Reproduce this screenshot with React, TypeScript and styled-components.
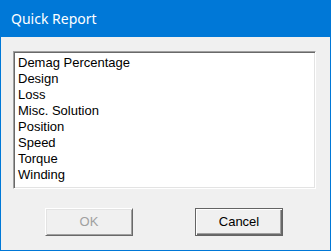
import React from "react";
import styled, { createGlobalStyle } from "styled-components";

const Global = createGlobalStyle`
  html, body { margin: 0; padding: 0; background: #f0f0f0; }
  * { box-sizing: border-box; }
`;

const Window = styled.div`
  width: 331px;
  height: 251px;
  display: flex;
  flex-direction: column;
  background: #f0f0f0;
  border: 1px solid #0078d7;
  border-top: none;
`;

const TitleBar = styled.div`
  height: 37px;
  margin: 0 -1px;
  background: #0078d7;
  color: #ffffff;
  display: flex;
  align-items: center;
  padding-left: 11px;
  padding-bottom: 1px;
  font-family: "Noto Sans", "Open Sans", sans-serif;
  font-size: 14px;
`;

const Body = styled.div`
  flex: 1;
  display: flex;
  flex-direction: column;
  padding: 14px 14px 0 12px;
`;

const ListBox = styled.div`
  height: 138px;
  width: 303px;
  background: #ffffff;
  border-style: solid;
  border-width: 1px;
  border-color: #a0a0a0 #ffffff #ffffff #a0a0a0;
  box-shadow: inset 1px 1px 0 #696969, inset -1px -1px 0 #e3e3e3;
  padding: 3px 0 0 4px;
  font-family: "Liberation Sans", Arial, sans-serif;
  font-size: 13px;
  color: #000000;
`;

const Item = styled.div`
  height: 16px;
  line-height: 16px;
  white-space: nowrap;
`;

const ButtonRow = styled.div`
  display: flex;
  gap: 62px;
  padding-left: 32px;
  margin-top: 19px;
`;

const Button = styled.div<{ $default?: boolean; $disabled?: boolean }>`
  width: 88px;
  height: 28px;
  display: flex;
  align-items: center;
  justify-content: center;
  padding-bottom: 1px;
  font-family: "Liberation Sans", Arial, sans-serif;
  font-size: 13px;
  background: #f0f0f0;
  color: ${(p) => (p.$disabled ? "#a0a0a0" : "#000000")};
  border: 1px solid;
  border-color: ${(p) =>
    p.$default ? "#646464" : "#ffffff #696969 #696969 #ffffff"};
  box-shadow: ${(p) =>
    p.$default
      ? "inset 1px 1px 0 #ffffff, inset -1px -1px 0 #696969, inset -2px -2px 0 #a0a0a0"
      : "inset 1px 1px 0 #e3e3e3, inset -1px -1px 0 #a0a0a0"};
`;

const items = [
  "Demag Percentage",
  "Design",
  "Loss",
  "Misc. Solution",
  "Position",
  "Speed",
  "Torque",
  "Winding",
];

export default function App() {
  return (
    <>
      <Global />
      <Window>
        <TitleBar>Quick Report</TitleBar>
        <Body>
          <ListBox>
            {items.map((t) => (
              <Item key={t}>{t}</Item>
            ))}
          </ListBox>
          <ButtonRow>
            <Button $disabled>OK</Button>
            <Button $default>Cancel</Button>
          </ButtonRow>
        </Body>
      </Window>
    </>
  );
}
